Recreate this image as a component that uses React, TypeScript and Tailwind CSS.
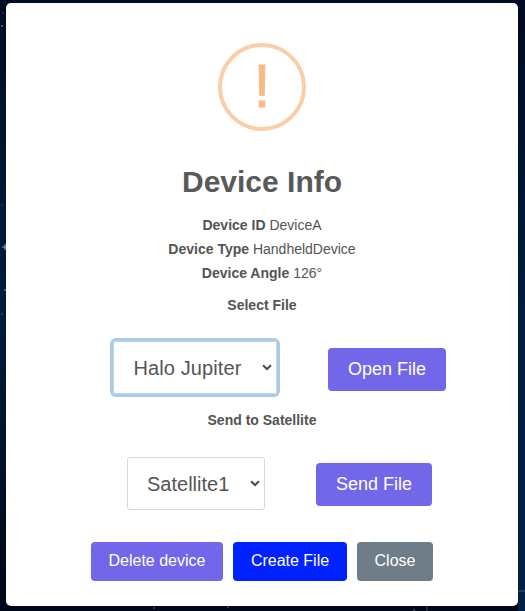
import type { ReactNode } from "react";

const starsLeft = [
  { top: 12, left: 2, o: 0.15 },
  { top: 25, left: 1, o: 0.4 },
  { top: 204, left: 1, o: 0.15 },
  { top: 289, left: 4, o: 0.4 },
  { top: 313, left: 1, o: 0.15 },
];

function Info({ label, value }: { label: string; value: string }) {
  return (
    <p className="h-6 whitespace-nowrap">
      <b>{label}</b> {value}
    </p>
  );
}

function Select({ value, className }: { value: string; className: string }) {
  return (
    <div className={`flex h-[53px] items-center justify-between rounded-[3px] border text-[20px] text-[#545454] ${className}`}>
      <span className="whitespace-nowrap">{value}</span>
      <svg width="10" height="7" viewBox="0 0 10 7" fill="none">
        <path d="M1 1.2 L5 5 L9 1.2" stroke="#4b4b4b" strokeWidth="2" />
      </svg>
    </div>
  );
}

function Button({ children, className }: { children: ReactNode; className: string }) {
  return (
    <button className={`flex items-center justify-center rounded-[4px] whitespace-nowrap text-white ${className}`}>
      {children}
    </button>
  );
}

export default function App() {
  return (
    <div className="relative h-[611px] w-[525px] overflow-hidden bg-linear-to-b from-[#000c24] via-[#001c3c] to-[#000817] pt-[3px] pl-[6px] font-['Liberation_Sans',Arial,sans-serif]">
      <div className="absolute top-0 right-0 h-[611px] w-[7px] bg-linear-to-b from-[#000a20] via-[#001c3e] to-[#002146]" />
      {starsLeft.map((s) => (
        <i key={s.top} className="absolute size-[2px] bg-[#b5c4d5]" style={{ top: s.top, left: s.left, opacity: s.o }} />
      ))}
      <i className="absolute top-[246px] left-[2px] h-[2px] w-[4px] bg-[#8c9bae]/50" />
      <i className="absolute top-[244px] left-[4px] h-[6px] w-[2px] bg-[#a5b2c2]/50" />
      <i className="absolute top-[607px] left-[153px] size-[2px] bg-[#9baab8]/30" />
      <i className="absolute top-[606px] left-[227px] size-[2px] bg-[#9baab8]/30" />
      <i className="absolute top-[606px] left-[426px] h-[5px] w-[2px] bg-[#9baab8]/20" />
      <i className="absolute top-[609px] left-[413px] size-[2px] bg-[#9baab8]/30" />
      <i className="absolute top-[590px] left-[518px] h-[2px] w-[7px] bg-[#657e9b]/30" />

      <main className="relative flex h-[603px] w-[512px] flex-col items-center rounded-[5px] bg-white pt-10 text-[#545454]">
        <div className="flex size-[88px] items-center justify-center rounded-full border-4 border-[#facea8] pb-[2px] text-[61px] leading-none text-[#f8bb86] [-webkit-text-stroke:1px_#f8bb86]">
          !
        </div>
        <h2 className="mt-[30px] text-[30px] leading-[42px] font-bold text-[#595959]">Device Info</h2>
        <div className="mt-[10px] text-center text-[14px] leading-6">
          <Info label="Device ID" value="DeviceA" />
          <Info label="Device Type" value="HandheldDevice" />
          <Info label="Device Angle" value="126°" />
          <p className="mt-2 font-bold">Select File</p>
        </div>

        <div className="mt-[21px] flex h-[59px] w-full pl-[107px]">
          <Select value="Halo Jupiter" className="mt-[3px] w-[164px] border-[#b4dbed] pr-1 pl-[19.5px] tracking-[0.1px] ring-[3px] ring-[#b0c9e3]" />
          <Button className="mt-[10px] ml-[51px] h-[43px] w-[118px] bg-[#7367e9] text-[18px]">Open File</Button>
        </div>

        <p className="mt-[11px] text-[14px] leading-6 font-bold">Send to Satellite</p>

        <div className="mt-[25px] flex h-[53px] w-full pl-[121px]">
          <Select value="Satellite1" className="w-[138px] border-[#d9d9d9] pr-1 pl-[19px]" />
          <Button className="mt-[6px] ml-[51px] h-[43px] w-[116px] bg-[#7367e9] text-[18px]">Send File</Button>
        </div>

        <div className="mt-8 flex gap-[10px] text-[16px]">
          <Button className="h-[39px] w-[132px] bg-[#7367e9] pb-[2px]">Delete device</Button>
          <Button className="h-[39px] w-[114px] bg-[#0022ff] pb-[2px]">Create File</Button>
          <Button className="h-[39px] w-[76px] bg-[#6e7d88] pb-[2px]">Close</Button>
        </div>
      </main>
    </div>
  );
}
